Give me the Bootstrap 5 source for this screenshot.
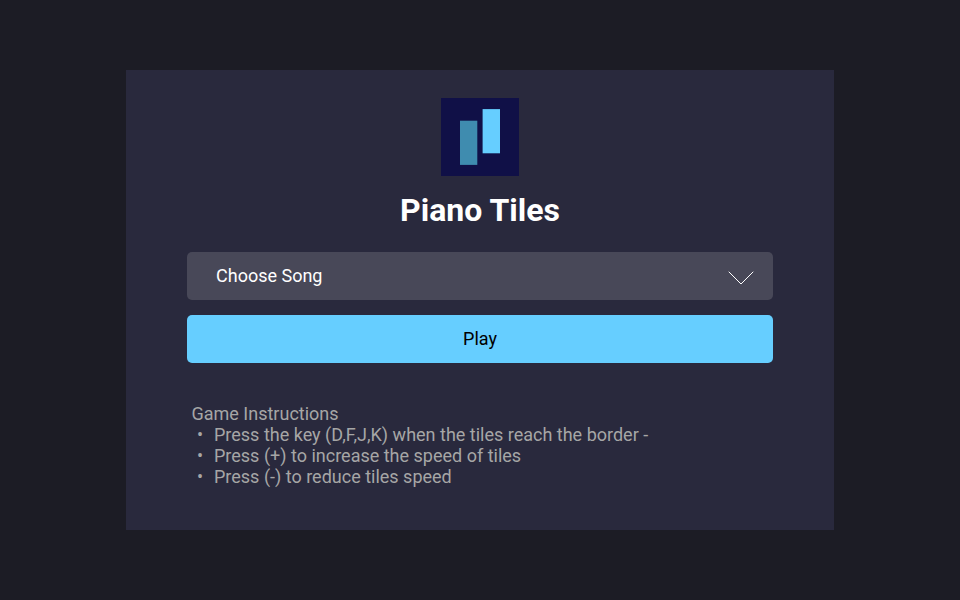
<!DOCTYPE html>
<html lang="en">
<head>
<meta charset="utf-8">
<meta name="viewport" content="width=device-width, initial-scale=1">
<title>Piano Tiles</title>
<link href="https://cdn.jsdelivr.net/npm/bootstrap@5.3.0/dist/css/bootstrap.min.css" rel="stylesheet">
<style>
body{background:#1c1c25;font-family:Roboto,sans-serif;font-size:18px}
.start-panel{width:708px;height:460px;background:#29293d;padding:28px 61px 0}
.game-title{font-size:32px;line-height:38px;font-weight:700;margin:15px 0 23px}
.song-select,.play-btn{height:48px;font-size:18px;line-height:21px;border:0;border-radius:5px;padding-top:5px;padding-bottom:7px}
.song-select,.song-select:hover{background:#484858}
.song-select{padding-left:29px;padding-right:19px;margin-bottom:15px}
.song-select svg{margin-top:6px}
.play-btn,.play-btn:hover{background:#66ceff;color:#000}
.instructions{color:#a6a6a6;line-height:21px;margin:40px 0 0 4.5px}
.instructions ul{padding-left:22.500px}
.instructions li{list-style:none}
.instructions li::before{content:"•";display:inline-block;width:17px;margin-left:-17px}
</style>
</head>
<body class="min-vh-100 d-flex align-items-center justify-content-center">
<main class="start-panel">
<svg class="d-block mx-auto" width="78" height="78" viewBox="0 0 78 78" aria-hidden="true"><path fill="#101047" d="M0 0h78v78H0z"/><path fill="#3f8caf" d="M19 22.700h17.300v44.200H19z"/><path fill="#66ceff" d="M41.600 11.100H59v44.200H41.600z"/></svg>
<h1 class="game-title text-white text-center">Piano Tiles</h1>
<button type="button" class="btn song-select text-white w-100 d-flex align-items-center justify-content-between"><span>Choose Song</span><svg width="26" height="14" viewBox="0 0 26 14" fill="none" stroke="#fff" stroke-linecap="round" aria-hidden="true"><path d="m1 1 12 12L25 1"/></svg></button>
<button type="button" class="btn play-btn w-100 d-flex align-items-center justify-content-center">Play</button>
<section class="instructions"><div>Game Instructions</div><ul class="mb-0"><li>Press the key (D,F,J,K) when the tiles reach the border -</li><li>Press (+) to increase the speed of tiles</li><li>Press (-) to reduce tiles speed</li></ul></section>
</main>
<script src="https://cdn.jsdelivr.net/npm/bootstrap@5.3.0/dist/js/bootstrap.bundle.min.js"></script>
</body>
</html>
